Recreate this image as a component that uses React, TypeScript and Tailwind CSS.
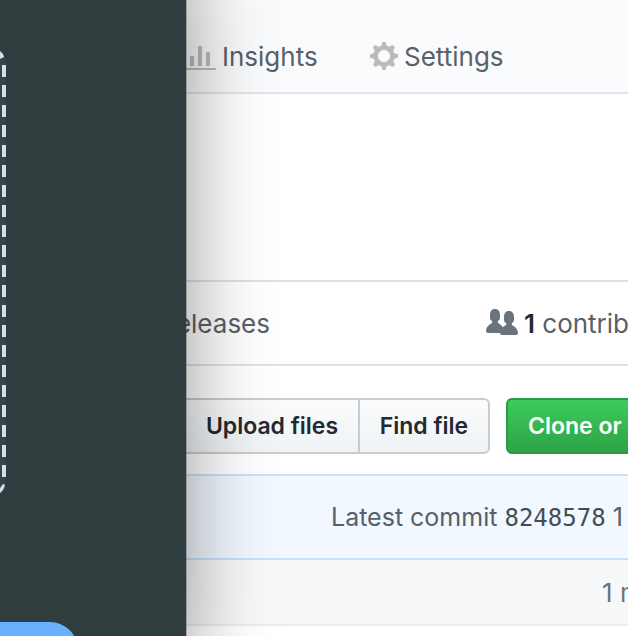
import React from "react";

function GraphIcon() {
  return (
    <svg className="h-8 w-8 shrink-0 fill-[#bbbdbf]" viewBox="0 0 16 16" aria-hidden="true">
      <path d="M16 14v1H0V0h1v14h15zM5 13H3V8h2v5zm4 0H7V3h2v10zm4 0h-2V6h2v7z" />
    </svg>
  );
}

function GearIcon() {
  return (
    <svg className="h-8 w-7 shrink-0 fill-[#b9bbbd]" viewBox="0 0 14 16" aria-hidden="true">
      <path
        fillRule="evenodd"
        d="M14 8.77v-1.6l-1.94-.64-.45-1.09.88-1.84-1.13-1.13-1.81.91-1.09-.45-.69-1.92h-1.6l-.63 1.94-1.11.45-1.84-.88-1.13 1.13.91 1.81-.45 1.09L0 7.23v1.59l1.94.64.45 1.09-.88 1.84 1.13 1.13 1.81-.91 1.09.45.69 1.92h1.59l.63-1.94 1.11-.45 1.84.88 1.13-1.13-.92-1.81.47-1.09L14 8.75v.02zM7 11c-1.66 0-3-1.34-3-3s1.34-3 3-3 3 1.34 3 3-1.34 3-3 3z"
      />
    </svg>
  );
}

function PeopleIcon() {
  return (
    <svg className="h-8 w-8 shrink-0 fill-[#6a737d]" viewBox="0 0 16 16" aria-hidden="true">
      <path d="M16 12.999c0 .439-.45 1-1 1H7.995c-.539 0-.994-.447-.995-.999H1c-.54 0-1-.561-1-1 0-2.634 3-4 3-4s.229-.409 0-1c-.841-.621-1.058-.59-1-3 .058-2.419 1.367-3 2.5-3s2.442.58 2.5 3c.058 2.41-.159 2.379-1 3-.229.59 0 1 0 1s1.549.711 2.42 2.088C9.196 9.369 10 8.999 10 8.999s.229-.409 0-1c-.841-.62-1.058-.59-1-3 .058-2.419 1.367-3 2.5-3s2.437.581 2.495 3c.059 2.41-.158 2.38-1 3-.229.59 0 1 0 1s3.005 1.366 3.005 4" />
    </svg>
  );
}

/* Right edge of the dashed drop zone */
function DropZoneEdge() {
  return (
    <svg className="mt-[50px] h-[444px] w-1.5 shrink-0" viewBox="0 0 6 444" aria-hidden="true">
      <path d="M0 0Q6 6 6 14V430Q6 438 0 444Z" fill="#37444b" />
      <path d="M4 15V430" stroke="#d5dfe5" strokeWidth="4" strokeDasharray="12 8" />
      <path d="M0 1Q3 3 4 7L0 9Z" fill="#d5dfe5" />
      <path d="M5 435Q4 440 0 443V438L3 434Z" fill="#d5dfe5" />
    </svg>
  );
}

/* The window reaches past the top and bottom of the page, so its shadow stays even along the edge */
function DropWindow() {
  return (
    <aside className="relative z-10 -my-10 flex w-[186px] shrink-0 flex-col items-start bg-[#303d3f] py-10 shadow-[0_0_86px_rgba(0,0,0,0.42),0_0_0_1px_rgba(0,0,0,0.2)]">
      <DropZoneEdge />
      <button
        type="button"
        aria-label="Choose"
        className="mt-32 h-14 w-[78px] shrink-0 rounded-r-[28px] bg-[#69b1ff]"
      />
    </aside>
  );
}

export default function App() {
  return (
    <div className="flex h-screen overflow-hidden bg-white font-['Inter',sans-serif] text-[26px] leading-8 whitespace-nowrap text-[#586069]">
      <DropWindow />
      <main className="min-w-0 flex-1 overflow-hidden">
        <nav className="flex gap-[52px] border-b-2 border-[#e1e4e8] bg-[#fafbfc] pt-10 pb-[18px] leading-[34px]">
          <a href="#insights" className="-ml-0.5 flex w-[134px] gap-1.5">
            <GraphIcon />
            Insights
          </a>
          <a href="#settings" className="flex gap-1.5">
            <GearIcon />
            Settings
          </a>
        </nav>

        <div className="mt-[186px] flex border-y-2 border-[#dfe2e5] pt-[25px] pb-[23px] leading-[34px]">
          <a href="#releases" className="flex w-[84px] justify-end">
            releases
          </a>
          <a href="#contributors" className="ml-[216px] flex gap-1.5">
            <PeopleIcon />
            <span>
              <strong className="font-semibold text-[#24292e]">1</strong> contributor
            </span>
          </a>
        </div>

        <div className="mt-8 flex text-[23px] font-semibold text-[#24292e]">
          <button
            type="button"
            className="h-14 w-[172px] shrink-0 border-y-2 border-[#c9cccf] bg-linear-to-b from-[#fafbfc] to-[#eff3f6] text-center"
          >
            Upload files
          </button>
          <button
            type="button"
            className="h-14 w-[132px] shrink-0 rounded-r-md border-2 border-[#c9cccf] bg-linear-to-b from-[#fafbfc] to-[#eff3f6] text-center"
          >
            Find file
          </button>
          <button
            type="button"
            className="ml-4 h-14 shrink-0 rounded-md border-2 border-[#2c9a43] bg-linear-to-b from-[#3dcb5c] to-[#2da346] px-5 text-white"
          >
            Clone or download
          </button>
        </div>

        <div className="mt-5 border-y-2 border-[#c8e1ff] bg-[#f1f8ff] py-[25px] pl-[145px] text-[25px]">
          Latest commit{" "}
          <a
            href="#commit"
            className="font-['DejaVu_Sans_Mono',monospace] text-[24px] leading-none text-[#444d56]"
          >
            8248578
          </a>{" "}
          1 minute ago
        </div>
        <div className="border-b-2 border-[#eaecef] bg-[#f6f8fa] pt-[17px] pb-[15px] pl-[416px] text-[#6a737d]">
          1 minute ago
        </div>
      </main>
    </div>
  );
}
